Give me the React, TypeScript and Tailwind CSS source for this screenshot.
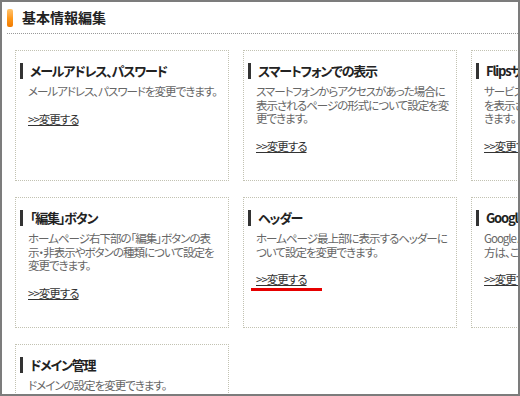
import React from 'react'

type Item = {
  title: string
  lines: string[]
  marked?: boolean
}

const items: Item[] = [
  { title: 'メールアドレス、パスワード', lines: ['メールアドレス、パスワードを変更できます。'] },
  {
    title: 'スマートフォンでの表示',
    lines: ['スマートフォンからアクセスがあった場合に', '表示されるページの形式について設定を変', '更できます。'],
  },
  {
    title: 'Flipsサイトバナー',
    lines: ['サービスロゴ（Flipsバナー）', 'を表示させるかどうかを設定で', 'きます。'],
  },
  {
    title: '「編集」ボタン',
    lines: ['ホームページ右下部の「編集」ボタンの表', '示・非表示やボタンの種類について設定を', '変更できます。'],
  },
  {
    title: 'ヘッダー',
    lines: ['ホームページ最上部に表示するヘッダーに', 'ついて設定を変更できます。'],
    marked: true,
  },
  {
    title: 'Google Analytics',
    lines: ['Google Analyticsをご利用の', '方は、こちらで設定できます。'],
  },
  { title: 'ドメイン管理', lines: ['ドメインの設定を変更できます。'] },
]

function Card({ item }: { item: Item }) {
  return (
    <div className="w-[214px] h-[131px] border border-dotted border-[#c2c2b2] bg-white px-[4px] pt-[12px]">
      <div className="flex items-center gap-[7px]">
        <div className="w-[3px] h-[16px] bg-[#333]" />
        <h3 className="text-[13px] leading-[16px] font-bold tracking-[-1.2px] text-[#222] whitespace-nowrap">
          {item.title}
        </h3>
      </div>
      <p className="mt-[6px] ml-[8px] text-[11.5px] leading-[13.5px] tracking-[-1px] text-[#666] whitespace-nowrap">
        {item.lines.map((l, i) => (
          <span key={i} className="block">
            {l}
          </span>
        ))}
      </p>
      <div className="mt-[13px] ml-[8px] text-[11.5px] leading-[14px]">
        <a className="relative inline-block tracking-[-1px] text-[#333] underline whitespace-nowrap">
          &gt;&gt;変更する
          {item.marked && (
            <span className="absolute left-[-5px] top-[calc(100%+2px)] w-[71px] h-[3px] bg-[#e60000]" />
          )}
        </a>
      </div>
    </div>
  )
}

export default function App() {
  return (
    <div className="w-[520px] h-[396px] border-2 border-[#7c7c7c] bg-white overflow-hidden font-['Noto_Sans_CJK_JP',sans-serif] [font-feature-settings:'palt']">
      <div className="ml-[5px] h-[32px] flex items-center gap-[9px] border-b border-dotted border-[#999]">
        <div className="w-[6px] h-[18px] rounded-[2px] bg-gradient-to-b from-[#ffc46a] via-[#ff9a1a] to-[#f07a00]" />
        <h1 className="text-[14px] font-bold text-[#222]">基本情報編集</h1>
      </div>
      <div className="pl-[13px] pt-[16px] grid grid-cols-[214px_214px_214px] gap-x-[14px] gap-y-[16px]">
        {items.map((it, i) => (
          <Card key={i} item={it} />
        ))}
      </div>
    </div>
  )
}
